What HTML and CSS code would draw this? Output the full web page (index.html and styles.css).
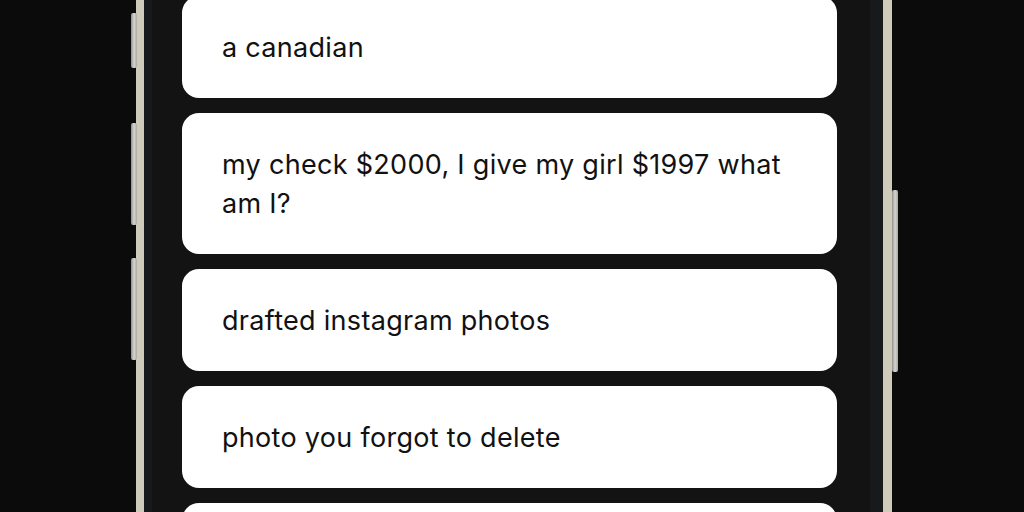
FILE: index.html
```html
<!DOCTYPE html>
<html>
<head>
<meta charset="utf-8">
<link rel="stylesheet" href="styles.css">
</head>
<body>
<div class="stage">
  <div class="phone">
    <span class="btn btn-l1"></span>
    <span class="btn btn-l2"></span>
    <span class="btn btn-l3"></span>
    <span class="btn btn-r1"></span>
    <div class="bezel">
      <div class="screen">
        <div class="list">
          <div class="card">a canadian</div>
          <div class="card">my check $2000, I give my girl $1997 what am I?</div>
          <div class="card">drafted instagram photos</div>
          <div class="card">photo you forgot to delete</div>
          <div class="card">&nbsp;</div>
        </div>
      </div>
    </div>
  </div>
</div>
</body>
</html>
```
FILE: styles.css
```css
html, body {
  margin: 0;
  padding: 0;
  background: #0b0b0b;
  overflow: hidden;
  height: 512px;
}
.stage {
  display: flex;
  padding-left: 136px;
  height: 512px;
}
.phone {
  position: relative;
  width: 756px;
  height: 512px;
  box-sizing: border-box;
  border-left: 8px solid #cfcbba;
  border-right: 9px solid #cfcbba;
  background: #17191a;
}
.btn {
  position: absolute;
  width: 6px;
  border-radius: 2px;
  background: linear-gradient(90deg, #8f8f8c, #d6d5d0 50%, #a9a8a3);
}
.btn-l1 { left: -13px; top: 13px; height: 55px; }
.btn-l2 { left: -13px; top: 123px; height: 102px; }
.btn-l3 { left: -13px; top: 258px; height: 102px; }
.btn-r1 { right: -15px; top: 190px; height: 182px; }
.bezel {
  height: 100%;
  padding: 0 13px 0 8px;
  box-sizing: border-box;
  display: flex;
}
.screen {
  flex: 1;
  background: #131313;
  padding: 0 33px 0 30px;
  overflow: hidden;
}
.list {
  display: flex;
  flex-direction: column;
  gap: 15px;
  margin-top: -4px;
}
.card {
  background: #ffffff;
  border-radius: 17px;
  padding: 32px 40px 31px;
  font-family: Inter, "Noto Sans", sans-serif;
  font-size: 27px;
  letter-spacing: 0.3px;
  line-height: 39px;
  color: #111111;
}
```
